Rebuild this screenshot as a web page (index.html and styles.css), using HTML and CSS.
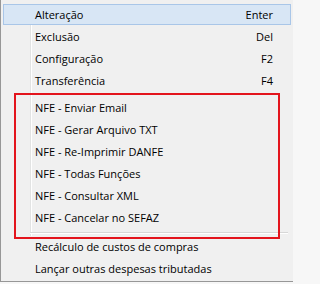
FILE: index.html
```html
<!DOCTYPE html>
<html lang="pt">
<head>
<meta charset="utf-8">
<title>Menu</title>
<link rel="stylesheet" href="styles.css">
</head>
<body>
<div class="menu">
  <div class="group gutter">
    <div class="item active"><span class="label">Alteração</span><span class="key">Enter</span></div>
    <div class="item"><span class="label">Exclusão</span><span class="key">Del</span></div>
    <div class="item"><span class="label">Configuração</span><span class="key">F2</span></div>
    <div class="item"><span class="label">Transferência</span><span class="key">F4</span></div>
    <div class="sep sep-top"></div>
    <div class="item"><span class="label">NFE - Enviar Email</span></div>
    <div class="item"><span class="label">NFE - Gerar Arquivo TXT</span></div>
    <div class="item"><span class="label">NFE - Re-Imprimir DANFE</span></div>
    <div class="item"><span class="label">NFE - Todas Funções</span></div>
    <div class="item"><span class="label">NFE - Consultar XML</span></div>
    <div class="item"><span class="label">NFE - Cancelar no SEFAZ</span></div>
    <div class="sep sep-bottom"></div>
  </div>
  <div class="group">
    <div class="item"><span class="label">Recálculo de custos de compras</span></div>
    <div class="item"><span class="label">Lançar outras despesas tributadas</span></div>
  </div>
  <div class="annotation"></div>
</div>
</body>
</html>
```
FILE: styles.css
```css
html, body {
  margin: 0;
  padding: 0;
}
body {
  background: #f7f7f7;
  font-family: "Open Sans", "Liberation Sans", sans-serif;
  font-size: 11px;
  color: #000;
}
.menu {
  position: relative;
  width: 292px;
  height: 277px;
  padding: 4px 0 0 0;
  background: #f0f0f0;
  border-left: 1px solid #979797;
  border-bottom: 1px solid #979797;
}
.group.gutter {
  background: linear-gradient(to right,
    transparent 29px, #e2e3e3 29px, #e2e3e3 30px,
    #ffffff 30px, #ffffff 31px, transparent 31px);
}
.item {
  box-sizing: border-box;
  display: flex;
  align-items: center;
  justify-content: space-between;
  height: 21px;
  margin: 0 2px 1px 2px;
  padding: 0 17px 0 31px;
  border: 1px solid transparent;
  line-height: 1;
}
.item.active {
  background: #d8e6f5;
  border-color: #a9c6e8;
}
.sep-top {
  height: 5px;
}
.sep-bottom {
  height: 7px;
  background: linear-gradient(to bottom,
    transparent 3px, #d7d7d7 3px, #d7d7d7 4px,
    #ffffff 4px, #ffffff 5px, transparent 5px) no-repeat 29px 0 / 258px 100%;
}
.annotation {
  position: absolute;
  left: 13px;
  top: 93px;
  width: 262px;
  height: 142px;
  border: 2px solid #e3141c;
}
```
